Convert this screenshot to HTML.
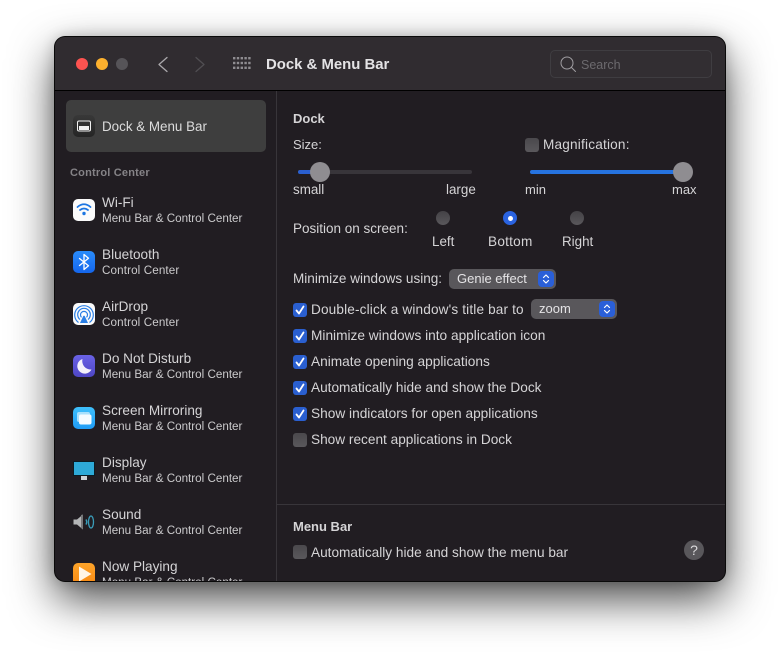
<!DOCTYPE html>
<html><head><meta charset="utf-8"><style>
html,body{margin:0;padding:0;width:780px;height:654px;overflow:hidden;background:#fff}
body{font-family:"Liberation Sans",sans-serif;position:relative;color:#d9d8da}
.win{position:absolute;left:55px;top:37px;width:670px;height:544px;border-radius:10px;background:#211d22;box-shadow:0 0 0 1px #0a0a0a,0 18px 44px rgba(0,0,0,.72),0 0 14px rgba(0,0,0,.2);overflow:hidden}
.a{position:absolute;white-space:nowrap}
.t{position:absolute;white-space:nowrap;font-size:13.6px;line-height:16px;color:#d5d4d6}
.r{margin-top:1px}
.s{position:absolute;white-space:nowrap;font-size:11.650px;line-height:14px;color:#cbcacc;margin-top:1px}
.cc{letter-spacing:.12px}
.b{font-weight:bold;color:#d5d4d6;font-size:13px}
.cb{position:absolute;width:14px;height:14px;border-radius:3px;background:#2a5fd0}
.cb svg{position:absolute;left:0;top:0}
.cbo{position:absolute;width:14px;height:14px;border-radius:3px;background:linear-gradient(#4a484c,#5a585c)}
.ic{position:absolute;left:18px;width:22px;height:22px;border-radius:5px;overflow:hidden}
.ic svg{position:absolute;left:0;top:0}
.rad{position:absolute;width:14px;height:14px;border-radius:50%;background:linear-gradient(#444246,#59575b)}
.thumb{position:absolute;width:20px;height:20px;border-radius:50%;background:#8f8d91}
.sel{position:absolute;height:20px;border-radius:5px;background:#59575b}
.step{position:absolute;right:2px;top:2px;width:16px;height:16px;border-radius:4px;background:#2a5fd8}
</style></head><body>
<div class="win">
 <div class="a" style="left:0;top:0;width:670px;height:53px;background:#302c30;border-bottom:1px solid #000"></div>
 <div class="a" style="left:21px;top:21px;width:12px;height:12px;border-radius:50%;background:#fd5350"></div>
 <div class="a" style="left:41px;top:21px;width:12px;height:12px;border-radius:50%;background:#fdb12e"></div>
 <div class="a" style="left:61px;top:21px;width:12px;height:12px;border-radius:50%;background:#565458"></div>
 <svg class="a" style="left:100px;top:17px" width="60" height="20" fill="none" stroke-width="1.300" stroke-linecap="round" stroke-linejoin="round"><path d="M12 3.500L4 10.500 12 17.500" stroke="#aaa8ab"/><path d="M41 3.500L49 10.500 41 17.500" stroke="#504e52"/></svg>
 <svg class="a" style="left:177px;top:19px" width="20" height="16" fill="#8f8d91"><g><rect x="1" y="1" width="2.400" height="2.400"/><rect x="4.800" y="1" width="2.400" height="2.400"/><rect x="8.600" y="1" width="2.400" height="2.400"/><rect x="12.400" y="1" width="2.400" height="2.400"/><rect x="16.200" y="1" width="2.400" height="2.400"/><rect x="1" y="5.800" width="2.400" height="2.400"/><rect x="4.800" y="5.800" width="2.400" height="2.400"/><rect x="8.600" y="5.800" width="2.400" height="2.400"/><rect x="12.400" y="5.800" width="2.400" height="2.400"/><rect x="16.200" y="5.800" width="2.400" height="2.400"/><rect x="1" y="10.600" width="2.400" height="2.400"/><rect x="4.800" y="10.600" width="2.400" height="2.400"/><rect x="8.600" y="10.600" width="2.400" height="2.400"/><rect x="12.400" y="10.600" width="2.400" height="2.400"/><rect x="16.200" y="10.600" width="2.400" height="2.400"/></g></svg>
 <div class="a" style="left:211px;top:19px;font-size:14.900px;line-height:18px;font-weight:bold;color:#e4e3e5">Dock &amp; Menu Bar</div>
 <div class="a" style="left:495px;top:13px;width:160px;height:26px;border:1px solid #3f3d41;border-radius:5px;background:#322e32"></div>
 <svg class="a" style="left:504px;top:18px" width="18" height="18" fill="none" stroke="#a09ea2" stroke-width="1" stroke-linecap="round"><circle cx="8" cy="8" r="6"/><path d="M12.400 12.400L16.500 16.500"/></svg>
 <div class="a" style="left:526px;top:21px;font-size:12.500px;line-height:15px;color:#6c6a6e">Search</div>

 <div class="a" style="left:221px;top:54px;width:1px;height:490px;background:#38353a"></div>
 <div class="a" style="left:11px;top:63px;width:200px;height:52px;border-radius:5px;background:#3e3e3e"></div>
 <div class="a" style="left:18px;top:78px;width:22px;height:22px;border-radius:5px;background:linear-gradient(#383838,#252525)"></div>
 <svg class="a" style="left:18px;top:78px" width="22" height="22" fill="none"><rect x="4.500" y="6" width="13" height="10" rx="1.500" stroke="#f0f0f0" stroke-width="1"/><rect x="6" y="11" width="10" height="4" fill="#f0f0f0"/></svg>
 <div class="t" style="left:47px;top:82px;color:#dcdcdc;font-size:13.400px">Dock &amp; Menu Bar</div>
 <div class="a" style="left:15px;top:130px;font-size:11px;line-height:13px;font-weight:bold;color:#858387;letter-spacing:.2px">Control Center</div>

 <div class="ic" style="top:162px;background:#fbfbfb"><svg width="22" height="22" fill="none" stroke="#1d76e2" stroke-linecap="round"><path d="M4.500 8Q11 2.500 17.500 8" stroke-width="1.800"/><path d="M7 11Q11 8 15 11" stroke-width="1.800"/><circle cx="11" cy="14.500" r="1.700" fill="#1d76e2" stroke="none"/></svg></div>
 <div class="t" style="left:47px;top:158px">Wi-Fi</div><div class="s" style="left:47px;top:174px">Menu Bar &amp; Control Center</div>

 <div class="ic" style="top:214px;background:linear-gradient(#2a8cfb,#1566ec)"><svg width="22" height="22" fill="none" stroke="#fff" stroke-width="1.300" stroke-linejoin="round" stroke-linecap="round"><path d="M6.500 7.500L15.500 14.800 11 18.500V3.500L15.500 7.200 6.500 14.500"/></svg></div>
 <div class="t" style="left:47px;top:210px">Bluetooth</div><div class="s cc" style="left:47px;top:226px">Control Center</div>

 <div class="ic" style="top:266px;background:#fbfbfb"><svg width="22" height="22" fill="none" stroke="#2a7fe6" stroke-width="1.200"><path d="M5.500 19.500A9.300 9.300 0 1 1 16.500 19.500"/><path d="M7 16.500A6.300 6.300 0 1 1 15 16.500"/><path d="M8.500 14.300A3.500 3.500 0 1 1 13.500 14.300"/><path d="M11 11.500L7 20H15Z" fill="#2a7fe6" stroke="none"/><circle cx="11" cy="11.500" r="1.300" fill="#fff" stroke="none"/></svg></div>
 <div class="t" style="left:47px;top:262px">AirDrop</div><div class="s cc" style="left:47px;top:278px">Control Center</div>

 <div class="ic" style="top:318px;background:linear-gradient(#6a62e6,#4e46c4)"><svg width="22" height="22"><path d="M9.500 4A7.500 7.500 0 1 0 18.500 14.500 8.500 8.500 0 0 1 9.500 4Z" fill="#f4f2fb"/></svg></div>
 <div class="t" style="left:47px;top:314px">Do Not Disturb</div><div class="s" style="left:47px;top:330px">Menu Bar &amp; Control Center</div>

 <div class="ic" style="top:370px;background:linear-gradient(#3fc0fb,#1f9cf6)"><svg width="22" height="22"><rect x="4" y="5" width="13" height="10" rx="2" fill="#a8e0fc"/><rect x="6" y="7.500" width="12.500" height="10" rx="2" fill="#f4fbff"/></svg></div>
 <div class="t" style="left:47px;top:366px">Screen Mirroring</div><div class="s" style="left:47px;top:382px">Menu Bar &amp; Control Center</div>

 <svg class="a" style="left:18px;top:424px" width="22" height="22"><rect x="0" y="0" width="22" height="15" fill="#0b1c24"/><rect x="1" y="1" width="20" height="13" fill="#2eaad8"/><rect x="8" y="15" width="6" height="4" fill="#cfd3d6"/></svg>
 <div class="t" style="left:47px;top:418px">Display</div><div class="s" style="left:47px;top:434px">Menu Bar &amp; Control Center</div>

 <svg class="a" style="left:18px;top:474px" width="22" height="22" fill="none"><path d="M0.500 8.500H4L10 3.500V18.500L4 13.500H0.500Z" fill="#b4b5b7"/><path d="M8 4L10 3.500V18.500L8 17Z" fill="#77787a"/><path d="M13 8.500Q14.500 11 13 13.500" stroke="#3a9cb8" stroke-width="1.500"/><ellipse cx="18" cy="11" rx="2.500" ry="6" stroke="#3a9cb8" stroke-width="1.300"/></svg>
 <div class="t" style="left:47px;top:470px">Sound</div><div class="s" style="left:47px;top:486px">Menu Bar &amp; Control Center</div>

 <div class="ic" style="top:526px;background:linear-gradient(#fda42a,#f98a14)"><svg width="22" height="22"><path d="M6 3.500L18.500 11 6 18.500Z" fill="#fff6e6"/></svg></div>
 <div class="t" style="left:47px;top:522px">Now Playing</div><div class="s" style="left:47px;top:538px">Menu Bar &amp; Control Center</div>

 <div class="t b r" style="left:238px;top:73px">Dock</div>
 <div class="t r" style="left:238px;top:99px;font-size:13px">Size:</div>
 <div class="a" style="left:243px;top:133px;width:174px;height:4px;border-radius:2px;background:#38353a"></div>
 <div class="a" style="left:243px;top:133px;width:20px;height:4px;border-radius:2px;background:#2a5fd0"></div>
 <div class="thumb" style="left:255px;top:125px"></div>
 <div class="t r" style="left:238px;top:144px;font-size:13.400px">small</div>
 <div class="t r" style="left:391px;top:144px;font-size:13.400px">large</div>

 <div class="cbo" style="left:470px;top:101px"></div>
 <div class="t r" style="left:488px;top:99px;letter-spacing:.2px">Magnification:</div>
 <div class="a" style="left:475px;top:133px;width:155px;height:4px;border-radius:2px;background:#2673e0"></div>
 <div class="thumb" style="left:618px;top:125px"></div>
 <div class="t r" style="left:470px;top:144px;font-size:13px">min</div>
 <div class="t r" style="left:617px;top:144px;font-size:13px">max</div>

 <div class="t r" style="left:238px;top:183px;font-size:13.500px">Position on screen:</div>
 <div class="rad" style="left:381px;top:174px"></div>
 <div class="rad" style="left:448px;top:174px;background:#2a63e0"></div>
 <div class="a" style="left:452.500px;top:178.500px;width:5px;height:5px;border-radius:50%;background:#fff"></div>
 <div class="rad" style="left:515px;top:174px"></div>
 <div class="t r" style="left:377px;top:196px;font-size:13.400px">Left</div>
 <div class="t r" style="left:433px;top:196px;letter-spacing:.25px">Bottom</div>
 <div class="t r" style="left:507px;top:196px;font-size:13.400px">Right</div>

 <div class="t" style="left:238px;top:234px;font-size:13.550px">Minimize windows using:</div>
 <div class="sel" style="left:394px;top:232px;width:107px"><div class="a" style="left:8px;top:2px;font-size:13px;line-height:16px;color:#e4e3e5">Genie effect</div><div class="step"><svg width="16" height="16" fill="none" stroke="#fff" stroke-width="1.200" stroke-linecap="round" stroke-linejoin="round"><path d="M5.500 6.500L8 4 10.500 6.500M5.500 9.500L8 12 10.500 9.500"/></svg></div></div>

 <div class="cb" style="left:238px;top:266px"><svg width="14" height="14" fill="none" stroke="#fff" stroke-width="1.800" stroke-linecap="round" stroke-linejoin="round"><path d="M3.500 7.500L6 10.500 10.500 3.500"/></svg></div>
 <div class="t r" style="left:256px;top:264px;letter-spacing:.15px">Double-click a window's title bar to</div>
 <div class="sel" style="left:476px;top:262px;width:86px"><div class="a" style="left:8px;top:2px;font-size:13px;line-height:16px;color:#e4e3e5">zoom</div><div class="step"><svg width="16" height="16" fill="none" stroke="#fff" stroke-width="1.200" stroke-linecap="round" stroke-linejoin="round"><path d="M5.500 6.500L8 4 10.500 6.500M5.500 9.500L8 12 10.500 9.500"/></svg></div></div>

 <div class="cb" style="left:238px;top:292px"><svg width="14" height="14" fill="none" stroke="#fff" stroke-width="1.800" stroke-linecap="round" stroke-linejoin="round"><path d="M3.500 7.500L6 10.500 10.500 3.500"/></svg></div>
 <div class="t r" style="left:256px;top:290px;font-size:13.700px">Minimize windows into application icon</div>
 <div class="cb" style="left:238px;top:318px"><svg width="14" height="14" fill="none" stroke="#fff" stroke-width="1.800" stroke-linecap="round" stroke-linejoin="round"><path d="M3.500 7.500L6 10.500 10.500 3.500"/></svg></div>
 <div class="t r" style="left:256px;top:316px;font-size:13.700px">Animate opening applications</div>
 <div class="cb" style="left:238px;top:344px"><svg width="14" height="14" fill="none" stroke="#fff" stroke-width="1.800" stroke-linecap="round" stroke-linejoin="round"><path d="M3.500 7.500L6 10.500 10.500 3.500"/></svg></div>
 <div class="t r" style="left:256px;top:342px;font-size:13.650px">Automatically hide and show the Dock</div>
 <div class="cb" style="left:238px;top:370px"><svg width="14" height="14" fill="none" stroke="#fff" stroke-width="1.800" stroke-linecap="round" stroke-linejoin="round"><path d="M3.500 7.500L6 10.500 10.500 3.500"/></svg></div>
 <div class="t r" style="left:256px;top:368px;font-size:13.700px">Show indicators for open applications</div>
 <div class="cbo" style="left:238px;top:396px"></div>
 <div class="t r" style="left:256px;top:394px;font-size:13.650px">Show recent applications in Dock</div>

 <div class="a" style="left:222px;top:467px;width:448px;height:1px;background:#38353a"></div>
 <div class="t b r" style="left:238px;top:481px">Menu Bar</div>
 <div class="cbo" style="left:238px;top:508px"></div>
 <div class="t r" style="left:256px;top:507px;font-size:13.650px">Automatically hide and show the menu bar</div>
 <div class="a" style="left:629px;top:503px;width:20px;height:20px;border-radius:50%;background:#59575b;color:#dcdbdd;font-size:14px;line-height:20px;text-align:center">?</div>
</div>
</body></html>
